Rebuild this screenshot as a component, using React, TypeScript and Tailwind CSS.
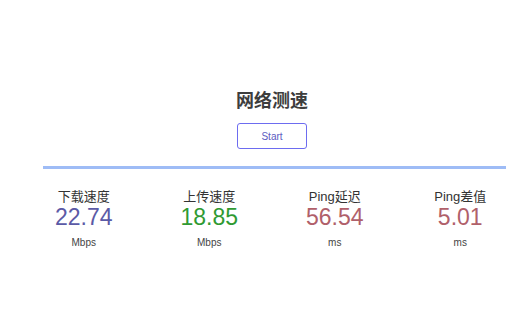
const stats = [
  { label: "下载速度", value: "22.74", unit: "Mbps", color: "text-[#5b5aa6]" },
  { label: "上传速度", value: "18.85", unit: "Mbps", color: "text-[#2f9a32]" },
  { label: "Ping延迟", value: "56.54", unit: "ms", color: "text-[#b0606a]" },
  { label: "Ping差值", value: "5.01", unit: "ms", color: "text-[#b0606a]" },
];

export default function App() {
  return (
    <div className="w-[532px] h-[329px] bg-white font-['Liberation_Sans','Noto_Sans_CJK_SC',sans-serif]">
      {/* header */}
      <div className="flex flex-col items-center pt-[89px] pl-3">
        <h1 className="text-[18px] leading-[24px] font-bold text-[#3d3d3d]">网络测速</h1>
        <button className="mt-[10px] w-[70px] h-[26px] rounded-[3px] border border-[#6d6cf0] text-[10px] text-[#5c5bbf] bg-white">
          Start
        </button>
      </div>

      <div className="mt-[17px] ml-[43px] w-[463px] h-[3px] bg-[#9ebcf6]" />

      {/* results */}
      <div className="grid grid-cols-4 ml-[21px] w-[502px] mt-[20px]">
        {stats.map((s, i) => (
          <div key={i} className="flex flex-col items-center">
            <div className="text-[13px] leading-[16px] text-[#333]">{s.label}</div>
            <div className={`text-[23px] leading-[24px] ${s.color}`}>{s.value}</div>
            <div className="mt-[7px] text-[10px] leading-[14px] text-[#444]">{s.unit}</div>
          </div>
        ))}
      </div>
    </div>
  );
}
